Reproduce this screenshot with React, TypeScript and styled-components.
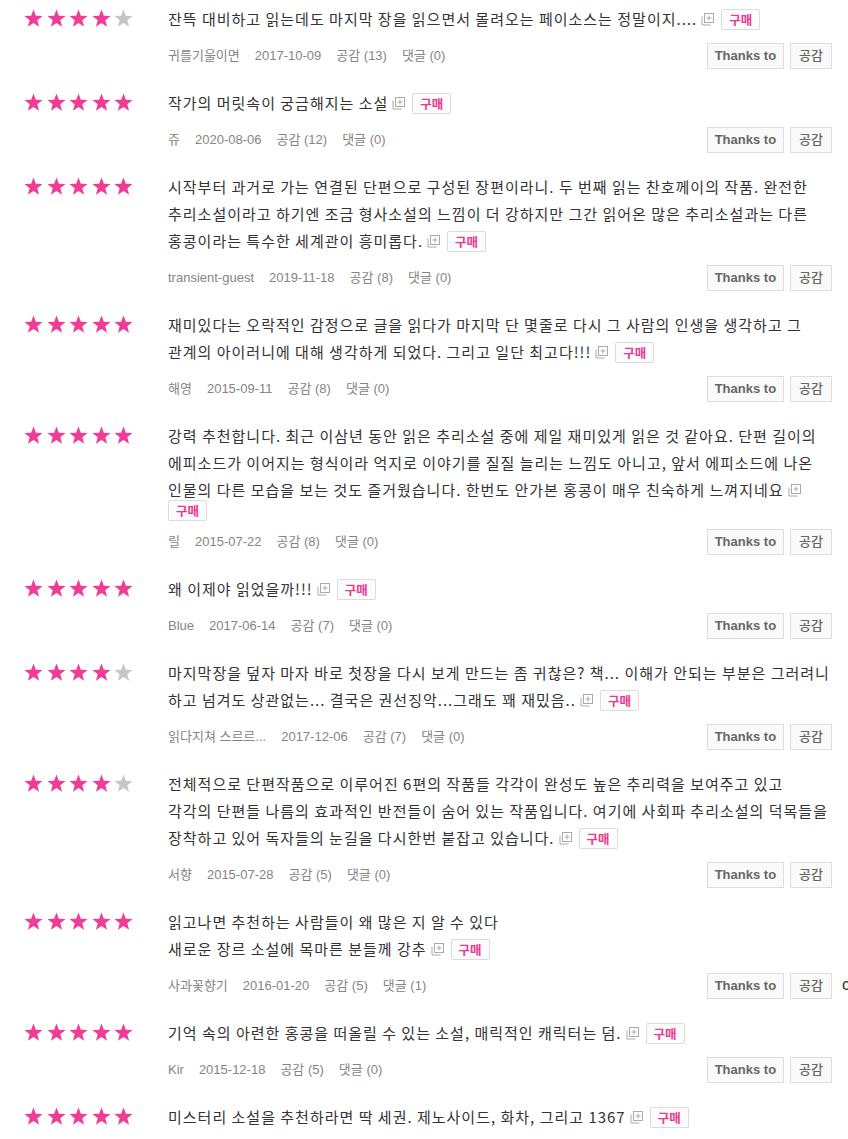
import React from "react";
import styled, { createGlobalStyle } from "styled-components";

const GlobalStyle = createGlobalStyle`
  html, body { margin: 0; padding: 0; background: #fff; }
  body { overflow-x: hidden; font-family: "Noto Sans CJK KR", "Noto Sans", sans-serif; }
`;

type Review = {
  rating: number;
  lines: string[];
  badgeOwnLine?: boolean;
  nick: string;
  date: string;
  likes: number;
  comments: number;
  overflow?: string;
};

const reviews: Review[] = [
  { rating: 4, lines: ["잔뜩 대비하고 읽는데도 마지막 장을 읽으면서 몰려오는 페이소스는 정말이지...."], nick: "귀를기울이면", date: "2017-10-09", likes: 13, comments: 0 },
  { rating: 5, lines: ["작가의 머릿속이 궁금해지는 소설"], nick: "쥬", date: "2020-08-06", likes: 12, comments: 0 },
  {
    rating: 5,
    lines: [
      "시작부터 과거로 가는 연결된 단편으로 구성된 장편이라니. 두 번째 읽는 찬호께이의 작품. 완전한",
      "추리소설이라고 하기엔 조금 형사소설의 느낌이 더 강하지만 그간 읽어온 많은 추리소설과는 다른",
      "홍콩이라는 특수한 세계관이 흥미롭다.",
    ],
    nick: "transient-guest", date: "2019-11-18", likes: 8, comments: 0,
  },
  {
    rating: 5,
    lines: [
      "재미있다는 오락적인 감정으로 글을 읽다가 마지막 단 몇줄로 다시 그 사람의 인생을 생각하고 그",
      "관계의 아이러니에 대해 생각하게 되었다. 그리고 일단 최고다!!!",
    ],
    nick: "해영", date: "2015-09-11", likes: 8, comments: 0,
  },
  {
    rating: 5,
    lines: [
      "강력 추천합니다. 최근 이삼년 동안 읽은 추리소설 중에 제일 재미있게 읽은 것 같아요. 단편 길이의",
      "에피소드가 이어지는 형식이라 억지로 이야기를 질질 늘리는 느낌도 아니고, 앞서 에피소드에 나온",
      "인물의 다른 모습을 보는 것도 즐거웠습니다. 한번도 안가본 홍콩이 매우 친숙하게 느껴지네요",
    ],
    badgeOwnLine: true,
    nick: "릴", date: "2015-07-22", likes: 8, comments: 0,
  },
  { rating: 5, lines: ["왜 이제야 읽었을까!!!"], nick: "Blue", date: "2017-06-14", likes: 7, comments: 0 },
  {
    rating: 4,
    lines: [
      "마지막장을 덮자 마자 바로 첫장을 다시 보게 만드는 좀 귀찮은? 책... 이해가 안되는 부분은 그러려니",
      "하고 넘겨도 상관없는... 결국은 권선징악...그래도 꽤 재밌음..",
    ],
    nick: "읽다지쳐 스르르...", date: "2017-12-06", likes: 7, comments: 0,
  },
  {
    rating: 4,
    lines: [
      "전체적으로 단편작품으로 이루어진 6편의 작품들 각각이 완성도 높은 추리력을 보여주고 있고",
      "각각의 단편들 나름의 효과적인 반전들이 숨어 있는 작품입니다. 여기에 사회파 추리소설의 덕목들을",
      "장착하고 있어 독자들의 눈길을 다시한번 붙잡고 있습니다.",
    ],
    nick: "서향", date: "2015-07-28", likes: 5, comments: 0,
  },
  {
    rating: 5,
    lines: ["읽고나면 추천하는 사람들이 왜 많은 지 알 수 있다", "새로운 장르 소설에 목마른 분들께 강추"],
    nick: "사과꽃향기", date: "2016-01-20", likes: 5, comments: 1, overflow: "c",
  },
  { rating: 5, lines: ["기억 속의 아련한 홍콩을 떠올릴 수 있는 소설, 매릭적인 캐릭터는 덤."], nick: "Kir", date: "2015-12-18", likes: 5, comments: 0 },
  { rating: 5, lines: ["미스터리 소설을 추천하라면 딱 세권. 제노사이드, 화차, 그리고 1367"], nick: "미스터리", date: "2015-12-10", likes: 5, comments: 0 },
];

const List = styled.ul`
  list-style: none;
  margin: 0;
  padding: 0 16px 0 24px;
`;

const Item = styled.li`
  display: flex;
  align-items: flex-start;
  padding: 5px 0 16px;
`;

const StarCol = styled.div`
  flex: 0 0 144px;
  height: 27px;
  display: flex;
  align-items: center;
  gap: 3.5px;
`;

const Body = styled.div`
  flex: 1;
  min-width: 0;
`;

const Comment = styled.div`
  font-size: 12px;
  line-height: 15px;
  color: #333;
  white-space: nowrap;
`;

const Text = styled.span`
  font-size: 15px;
  letter-spacing: 1px;
  line-height: 27px;
  color: #333;
`;

const AddIcon = styled.svg`
  display: inline-block;
  width: 13px;
  height: 13px;
  vertical-align: -1px;
  margin: 0 7px 0 4px;
`;

const Badge = styled.span`
  display: inline;
  padding: 0 7px;
  border: 1px solid #dcdcdc;
  border-radius: 2px;
  background: #fcfcfc;
  color: #e8398f;
  font-size: 12.5px;
  font-weight: 700;
  line-height: 15px;
`;

const Meta = styled.div`
  position: relative;
  display: flex;
  align-items: center;
  justify-content: space-between;
  height: 26px;
  margin-top: 10px;
`;

const Info = styled.div`
  display: flex;
  align-items: baseline;
  gap: 15px;
  padding-top: 2px;
  font-family: "Liberation Sans", "Noto Sans CJK KR", sans-serif;
  font-size: 13px;
  line-height: 18px;
  color: #858585;
`;

const Actions = styled.div`
  display: flex;
  gap: 6px;
  padding-top: 2px;
`;

const Btn = styled.button<{ $bold?: boolean }>`
  height: 26px;
  padding: 0 ${(p) => (p.$bold ? 7 : 8)}px;
  border: 1px solid #dedede;
  background: #fafafa;
  color: #666;
  font-family: "Liberation Sans", "Noto Sans CJK KR", sans-serif;
  font-size: 13px;
  font-weight: ${(p) => (p.$bold ? 700 : 500)};
  line-height: 18px;
  cursor: pointer;
`;

const Overflow = styled.span`
  position: absolute;
  left: calc(100% + 10px);
  top: 4px;
  font-family: "Liberation Sans", sans-serif;
  font-size: 16px;
  color: #333;
`;

const Star: React.FC<{ on: boolean }> = ({ on }) => (
  <svg width="19" height="19" viewBox="0 0 19 19">
    <polygon
      points="9.5,0.5 11.85,6.76 18.54,7.06 13.3,11.24 15.08,17.69 9.5,14 3.92,17.69 5.7,11.24 0.46,7.06 7.15,6.76"
      fill={on ? "#ef3c95" : "#c6c6c6"}
    />
  </svg>
);

const Plus = () => (
  <AddIcon viewBox="0 0 13 13">
    <path d="M1 3.5 V12 H9.5" fill="none" stroke="#aaa" strokeWidth="1" />
    <rect x="3.5" y="0.5" width="9" height="9" fill="#fff" stroke="#aaa" strokeWidth="1" />
    <path d="M8 2.5 V7.5 M5.5 5 H10.5" stroke="#aaa" strokeWidth="1" />
  </AddIcon>
);

export default function App() {
  return (
    <>
      <GlobalStyle />
      <List>
        {reviews.map((r, i) => (
          <Item key={i}>
            <StarCol>
              {[0, 1, 2, 3, 4].map((s) => (
                <Star key={s} on={s < r.rating} />
              ))}
            </StarCol>
            <Body>
              <Comment>
                <Text>
                  {r.lines.map((l, j) => (
                    <React.Fragment key={j}>
                      {j > 0 && <br />}
                      {l}
                    </React.Fragment>
                  ))}
                </Text>
                <Plus />
                {r.badgeOwnLine && <br />}
                <Badge>구매</Badge>
              </Comment>
              <Meta>
                <Info>
                  <span>{r.nick}</span>
                  <span>{r.date}</span>
                  <span>공감 ({r.likes})</span>
                  <span>댓글 ({r.comments})</span>
                </Info>
                <Actions>
                  <Btn $bold>Thanks to</Btn>
                  <Btn>공감</Btn>
                </Actions>
                {r.overflow && <Overflow>{r.overflow}</Overflow>}
              </Meta>
            </Body>
          </Item>
        ))}
      </List>
    </>
  );
}
